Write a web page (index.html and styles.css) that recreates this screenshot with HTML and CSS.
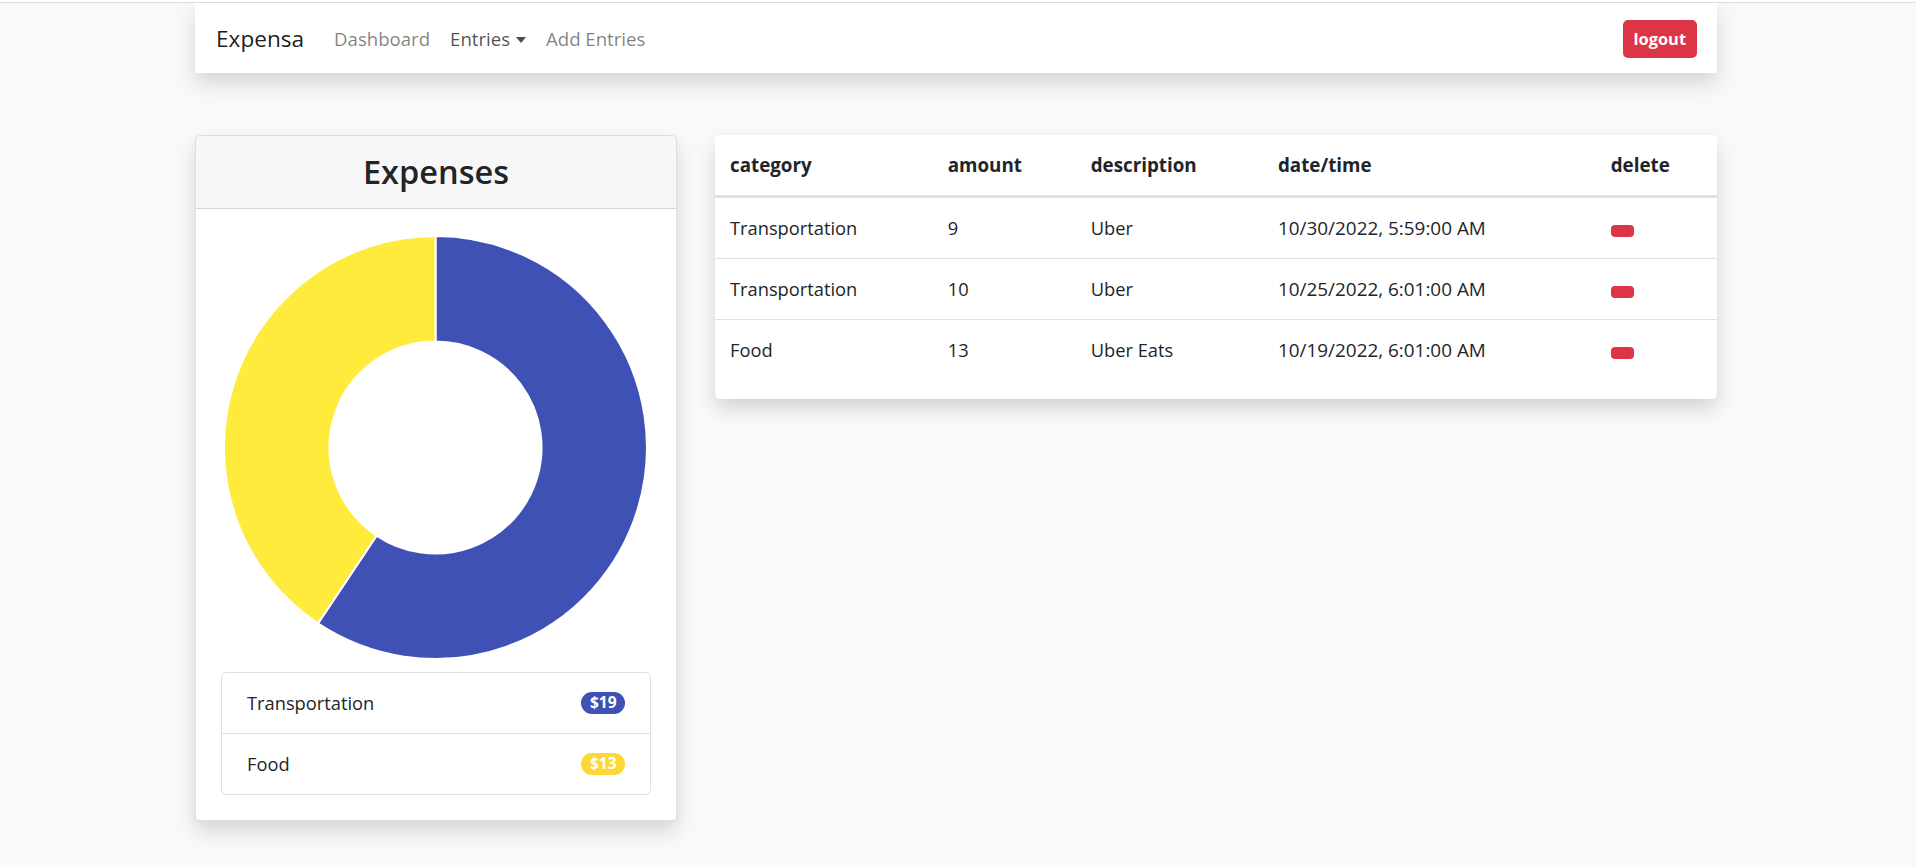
FILE: index.html
```html
<!DOCTYPE html>
<html lang="en">
<head>
<meta charset="utf-8">
<title>Expensa</title>
<link rel="stylesheet" href="styles.css">
</head>
<body>
<div class="container">
  <nav class="navbar">
    <a class="brand" href="#">Expensa</a>
    <ul class="nav">
      <li><a class="nav-link" href="#">Dashboard</a></li>
      <li><a class="nav-link active" href="#">Entries<span class="caret"></span></a></li>
      <li><a class="nav-link" href="#">Add Entries</a></li>
    </ul>
    <button class="btn-logout">logout</button>
  </nav>

  <div class="row">
    <div class="col-left">
      <div class="card">
        <div class="card-header"><h3 class="card-title">Expenses</h3></div>
        <div class="card-body">
          <svg class="chart" width="430" height="430" viewBox="0 0 430 430">
            <path d="M 214.5 2 A 211.5 211.5 0 1 1 97.0 389.4 L 155.6 301.6 A 106 106 0 1 0 214.5 107.5 Z" fill="#3f51b5" stroke="#fff" stroke-width="2" stroke-linejoin="miter"/>
            <path d="M 97.0 389.4 A 211.5 211.5 0 0 1 214.5 2 L 214.5 107.5 A 106 106 0 0 0 155.6 301.6 Z" fill="#ffeb3b" stroke="#fff" stroke-width="2" stroke-linejoin="miter"/>
          </svg>
          <ul class="list-group">
            <li class="list-item"><span>Transportation</span><span class="badge badge-blue">$19</span></li>
            <li class="list-item"><span>Food</span><span class="badge badge-yellow">$13</span></li>
          </ul>
        </div>
      </div>
    </div>

    <div class="col-right">
      <div class="table-card">
        <table class="table">
          <colgroup>
            <col class="c1"><col class="c2"><col class="c3"><col class="c4"><col class="c5">
          </colgroup>
          <thead>
            <tr><th>category</th><th>amount</th><th>description</th><th>date/time</th><th>delete</th></tr>
          </thead>
          <tbody>
            <tr><td>Transportation</td><td>9</td><td>Uber</td><td class="date">10/30/2022, 5:59:00 AM</td><td><button class="btn-del" aria-label="delete"></button></td></tr>
            <tr><td>Transportation</td><td>10</td><td>Uber</td><td class="date">10/25/2022, 6:01:00 AM</td><td><button class="btn-del" aria-label="delete"></button></td></tr>
            <tr><td>Food</td><td>13</td><td>Uber Eats</td><td class="date">10/19/2022, 6:01:00 AM</td><td><button class="btn-del" aria-label="delete"></button></td></tr>
          </tbody>
        </table>
      </div>
    </div>
  </div>
</div>
</body>
</html>
```
FILE: styles.css
```css
html {
  background: #ffffff;
}
body {
  margin: 2px 0 0;
  border-top: 1px solid #dcdcdc;
  min-height: calc(100vh - 3px);
  box-sizing: border-box;
  background: #f8f9fa;
  font-family: "Open Sans", "Noto Sans", sans-serif;
  font-size: 18.3px;
  line-height: 30px;
  color: #212529;
}
.container {
  width: 1522px;
  margin-left: calc(50% - 763px);
}

/* navbar */
.navbar {
  height: 70px;
  box-sizing: border-box;
  padding: 2px 20px 0;
  background: #fff;
  display: flex;
  align-items: center;
  box-shadow: 0 10px 20px rgba(0, 0, 0, 0.15);
}
.brand {
  font-size: 22.6px;
  line-height: 37.5px;
  color: rgba(0, 0, 0, 0.9);
  text-decoration: none;
  margin-right: 20px;
  padding-left: 1px;
}
.nav {
  list-style: none;
  margin: 0;
  padding: 0;
  display: flex;
  flex: 1;
}
.nav-link {
  display: flex;
  align-items: center;
  padding: 0 10px;
  font-size: 18.6px;
  line-height: 30px;
  color: rgba(0, 0, 0, 0.5);
  text-decoration: none;
}
.nav-link.active {
  color: rgba(0, 0, 0, 0.7);
}
.caret {
  display: inline-block;
  margin-left: 6px;
  margin-top: 2px;
  border-top: 6px solid rgba(0, 0, 0, 0.7);
  border-left: 5.5px solid transparent;
  border-right: 5.5px solid transparent;
}
.btn-logout {
  height: 38px;
  padding: 0 11px;
  border: 0;
  border-radius: 5px;
  background: #dc3545;
  color: #fff;
  font-family: "Open Sans", "Noto Sans", sans-serif;
  font-weight: 700;
  font-size: 16.4px;
  line-height: 38px;
}

/* layout */
.row {
  display: flex;
  gap: 38px;
  margin-top: 62px;
  align-items: flex-start;
}
.col-left {
  width: 482px;
  flex: none;
}
.col-right {
  width: 1002px;
  flex: none;
}

/* expenses card */
.card {
  background: #fff;
  border: 1px solid rgba(0, 0, 0, 0.125);
  border-radius: 5px;
  box-shadow: 0 10px 20px rgba(0, 0, 0, 0.15);
  overflow: hidden;
}
.card-header {
  background: rgba(0, 0, 0, 0.03);
  border-bottom: 1px solid rgba(0, 0, 0, 0.125);
  padding: 15px 25px;
}
.card-title {
  margin: 0;
  text-align: center;
  font-size: 32.5px;
  font-weight: 600;
  line-height: 42px;
  color: #212529;
}
.card-body {
  padding: 25px;
}
.chart {
  display: block;
}
.list-group {
  list-style: none;
  margin: 8px 0 0;
  padding: 0;
  border: 1px solid rgba(0, 0, 0, 0.125);
  border-radius: 5px;
}
.list-item {
  display: flex;
  justify-content: space-between;
  align-items: center;
  padding: 15px 25px;
  line-height: 30px;
}
.list-item + .list-item {
  border-top: 1px solid rgba(0, 0, 0, 0.125);
}
.badge {
  display: inline-block;
  font-size: 15.5px;
  font-weight: 700;
  line-height: 1;
  padding: 3.5px 8.5px;
  border-radius: 12px;
  color: #fff;
}
.badge-blue {
  background: #3f51b5;
}
.badge-yellow {
  background: #fdd835;
}

/* table card */
.table-card {
  background: #fff;
  border-radius: 5px;
  box-shadow: 0 10px 20px rgba(0, 0, 0, 0.15);
  padding-bottom: 19px;
}
.table {
  width: 100%;
  border-collapse: collapse;
  table-layout: fixed;
}
.c1 { width: 217.7px; }
.c2 { width: 143px; }
.c3 { width: 187.3px; }
.c4 { width: 332.7px; }
.c5 { width: 121.3px; }
.table th {
  text-align: left;
  font-weight: 700;
  font-size: 18.8px;
  line-height: 30px;
  padding: 15px;
  border-bottom: 3px solid #dee2e6;
}
.table td {
  padding: 15px;
  line-height: 30px;
  height: 30px;
  vertical-align: top;
}
.table tbody tr + tr td {
  border-top: 1px solid #dee2e6;
}
.table td.date {
  font-size: 18.9px;
}
.btn-del {
  display: inline-block;
  width: 23px;
  height: 12px;
  padding: 0;
  border: 0;
  border-radius: 4px;
  background: #dc3545;
  vertical-align: -2px;
}
```
